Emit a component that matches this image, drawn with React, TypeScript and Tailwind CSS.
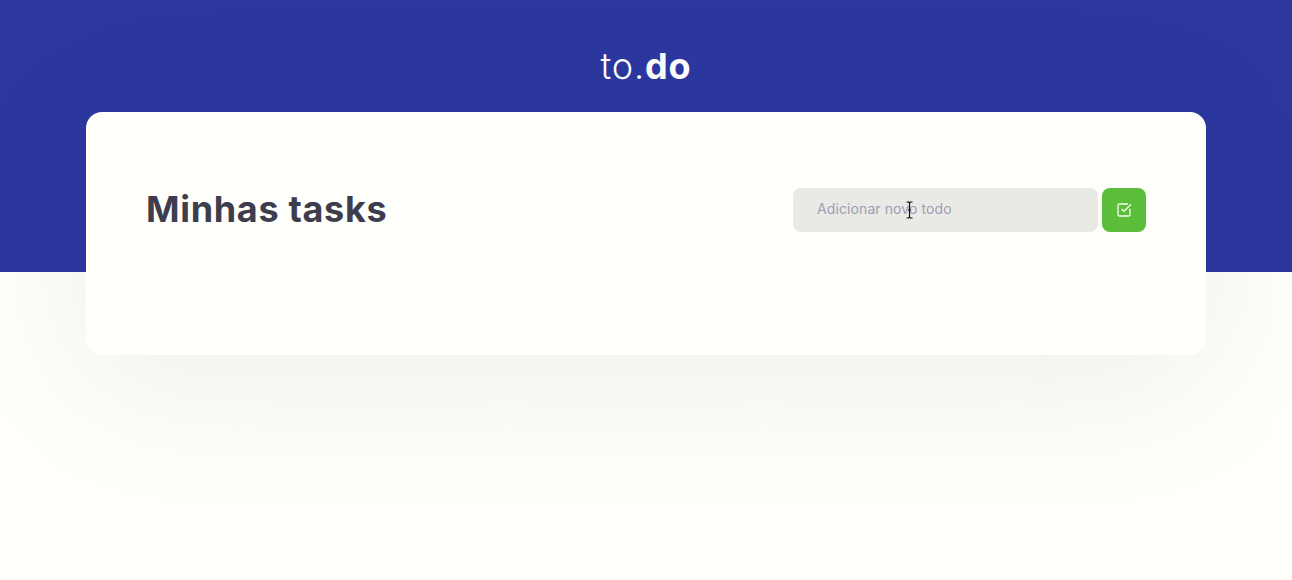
import { CheckSquare } from 'lucide-react';

export default function App() {
  return (
    <div className="min-h-[580px] bg-[#fffffb] font-['Inter',sans-serif]">
      <header className="flex h-[272px] justify-center bg-[#2c38a0] pt-[42px]">
        <h1 className="text-[36px] leading-[48px] font-light tracking-[0.85px] text-white">
          to.<span className="font-bold">do</span>
        </h1>
      </header>

      <main className="relative mx-auto -mt-[160px] h-[243px] w-[1120px] rounded-2xl bg-[#fffffb] px-[60px] pt-[76px] shadow-[0_24px_160px_rgba(0,0,0,0.08)]">
        <div className="flex items-start justify-between">
          <h2 className="-mt-px text-[36px] leading-[44px] font-bold tracking-[0.68px] text-[#3d3d4d]">Minhas tasks</h2>
          <div className="flex gap-1">
            <input
              type="text"
              placeholder="Adicionar novo todo"
              className="h-11 w-[305px] rounded-lg bg-[#e9eae6] px-6 pb-[3px] text-sm tracking-[0.1px] text-[#3d3d4d] outline-none placeholder:text-[#a09cb1]"
            />
            <button className="flex h-11 w-11 items-center justify-center rounded-lg bg-[#5bbd3a] text-[#f2fbee]">
              <CheckSquare size={16} strokeWidth={2} />
            </button>
          </div>
        </div>

        {/* mouse pointer over the input */}
        <svg className="absolute left-[819px] top-[89px]" width="9" height="18" viewBox="0 0 9 18" fill="none">
          <path d="M1.5 1H3.5L4.5 2L5.5 1H7.5M4.5 2V16M1.5 17H3.5L4.5 16L5.5 17H7.5M3 9H6" stroke="#111" strokeWidth="1.2" />
        </svg>
      </main>
    </div>
  );
}
